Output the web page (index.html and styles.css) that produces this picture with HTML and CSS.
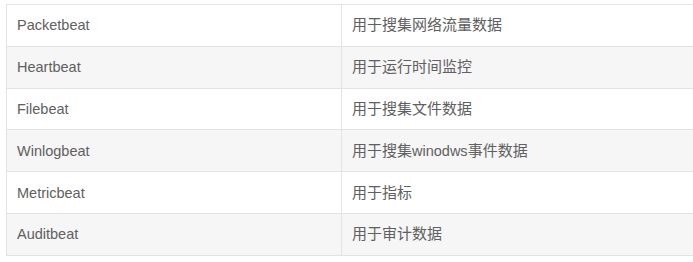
FILE: index.html
```html
<!DOCTYPE html>
<html lang="zh">
<head>
<meta charset="utf-8">
<link rel="stylesheet" href="styles.css">
</head>
<body>
<table class="beats">
  <tbody>
    <tr><td class="name">Packetbeat</td><td class="desc">用于搜集网络流量数据</td></tr>
    <tr><td class="name">Heartbeat</td><td class="desc">用于运行时间监控</td></tr>
    <tr><td class="name">Filebeat</td><td class="desc">用于搜集文件数据</td></tr>
    <tr><td class="name">Winlogbeat</td><td class="desc">用于搜集<span class="latin">winodws</span>事件数据</td></tr>
    <tr><td class="name">Metricbeat</td><td class="desc">用于指标</td></tr>
    <tr><td class="name">Auditbeat</td><td class="desc">用于审计数据</td></tr>
  </tbody>
</table>
</body>
</html>
```
FILE: styles.css
```css
html, body {
  margin: 0;
  background: #fff;
}
body {
  padding: 4px 0 0 6px;
  font-family: "Liberation Sans", Arial, "Noto Sans CJK SC", sans-serif;
  font-size: 14.5px;
  color: #606060;
}
.beats {
  border-collapse: collapse;
  width: 687px;
  border: 1px solid #e3e3e3;
  border-right: none;
}
.beats td {
  border: 1px solid #e3e3e3;
  border-right: none;
  padding: 10px 10px;
  height: 20.8px;
  line-height: 20px;
  vertical-align: middle;
}
.beats td.name {
  width: 314px;
  border-right: 1px solid #e3e3e3;
}
.beats td.desc {
  font-size: 15px;
}
.beats .latin {
  font-size: 14.5px;
}
.beats tr:nth-child(even) td {
  background: #f6f6f6;
}
```
